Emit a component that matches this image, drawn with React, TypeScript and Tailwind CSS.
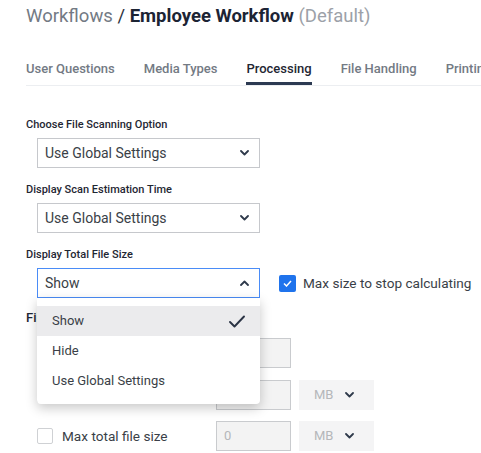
import React from "react";

function Chevron({ up = false }: { up?: boolean }) {
  return (
    <svg width="9" height="6" viewBox="0 0 9 6" className="shrink-0">
      <polyline
        points={up ? "1,5 4.5,1.5 8,5" : "1,1 4.5,4.5 8,1"}
        fill="none"
        stroke="#2f3a4b"
        strokeWidth="1.8"
        strokeLinecap="round"
        strokeLinejoin="round"
      />
    </svg>
  );
}

function Select({ value }: { value: string }) {
  return (
    <div className="ml-[11px] mt-[5px] flex h-[30px] w-[223px] items-center justify-between border border-[#c6c8cc] bg-white pl-[7px] pr-[10px] text-[14px] text-[#3a3f47]">
      <span>{value}</span>
      <Chevron />
    </div>
  );
}

function Label({ text, className = "" }: { text: string; className?: string }) {
  return (
    <div className={"text-[11px] leading-[16px] font-medium text-[#1f2733] " + className}>
      {text}
    </div>
  );
}

function SizeRow({ label, unit, className = "" }: { label: string; unit: boolean; className?: string }) {
  return (
    <div className={"ml-[11px] flex h-[30px] items-center " + className}>
      <div className="flex w-[179px] items-center">
        <span className="h-[16px] w-[16px] rounded-[2px] border border-[#cfd1d4] bg-white" />
        <span className="ml-[9px] text-[13.6px] text-[#3a3f47]">{label}</span>
      </div>
      <div className="flex h-[30px] w-[75px] items-center border border-[#c9cbce] bg-[#f3f3f3] pl-[7px] text-[13px] text-[#b5b7ba]">
        0
      </div>
      {unit && (
        <div className="ml-[8px] flex h-[30px] w-[75px] items-center gap-[12px] bg-[#f4f4f5] pl-[15px] text-[13px] text-[#b5b7ba]">
          MB
          <Chevron />
        </div>
      )}
    </div>
  );
}

export default function App() {
  const tabs = ["User Questions", "Media Types", "Processing", "File Handling", "Printing"];
  const options = ["Show", "Hide", "Use Global Settings"];

  return (
    <div className="relative h-[453px] w-[481px] overflow-hidden bg-white pl-[26px] font-['Roboto',sans-serif]">
      <h1 className="pt-[4px] text-[18.5px] leading-[24px] whitespace-nowrap">
        <span className="text-[#737a84]">Workflows</span>
        <span className="text-[#2b3240]"> / </span>
        <span className="font-bold text-[#1c2434]">Employee Workflow</span>
        <span className="text-[#9ca1a8]"> (Default)</span>
      </h1>

      <nav className="mt-[33px] flex gap-[29px] border-b border-[#eceef1] whitespace-nowrap">
        {tabs.map((t) => (
          <div
            key={t}
            className={
              t === "Processing"
                ? "border-b-[3px] border-[#2c3a52] pb-[5px] text-[13px] leading-[16px] font-medium text-[#1f2733]"
                : "border-b-[3px] border-transparent pb-[5px] text-[13px] leading-[16px] font-medium text-[#737a84]"
            }
          >
            {t}
          </div>
        ))}
      </nav>

      <Label text="Choose File Scanning Option" className="mt-[31px]" />
      <Select value="Use Global Settings" />

      <Label text="Display Scan Estimation Time" className="mt-[14px]" />
      <Select value="Use Global Settings" />

      <Label text="Display Total File Size" className="mt-[14px]" />
      <div className="mt-[5px] flex items-center">
        <div className="relative ml-[11px]">
          <div className="flex h-[30px] w-[223px] items-center justify-between border border-[#4a8cf7] bg-white pl-[7px] pr-[10px] text-[14px] text-[#3a3f47]">
            <span>Show</span>
            <Chevron up />
          </div>
          <div className="absolute left-0 top-full z-10 w-[223px] rounded-b-[4px] bg-white py-[8px] shadow-[0_4px_12px_rgba(0,0,0,0.22)]">
            {options.map((o) => (
              <div
                key={o}
                className={
                  "flex h-[30px] items-center justify-between px-[15px] text-[13px] text-[#3a3f47] " +
                  (o === "Show" ? "bg-[#ebebed]" : "")
                }
              >
                <span>{o}</span>
                {o === "Show" && (
                  <svg width="16" height="13" viewBox="0 0 16 13">
                    <polyline
                      points="1,7 5.5,11.5 15,1.5"
                      fill="none"
                      stroke="#2a3344"
                      strokeWidth="1.9"
                      strokeLinecap="round"
                      strokeLinejoin="round"
                    />
                  </svg>
                )}
              </div>
            ))}
          </div>
        </div>
        <span className="ml-[19px] flex h-[17px] w-[17px] items-center justify-center rounded-[2px] bg-[#1f73ec]">
          <svg width="9" height="7" viewBox="0 0 9 7">
            <polyline points="1,3.5 3.5,6 8,1" fill="none" stroke="#ffffff" strokeWidth="1.5" />
          </svg>
        </span>
        <span className="ml-[7px] whitespace-nowrap text-[13.6px] text-[#3a3f47]">Max size to stop calculating</span>
      </div>

      <div className="mt-[12px] text-[13px] leading-[16px] font-medium text-[#1f2733]">File Size Limits</div>
      <SizeRow label="Max file count" unit={false} className="mt-[12px]" />
      <SizeRow label="Max file size" unit={true} className="mt-[12px]" />
      <SizeRow label="Max total file size" unit={true} className="mt-[11px]" />
    </div>
  );
}
